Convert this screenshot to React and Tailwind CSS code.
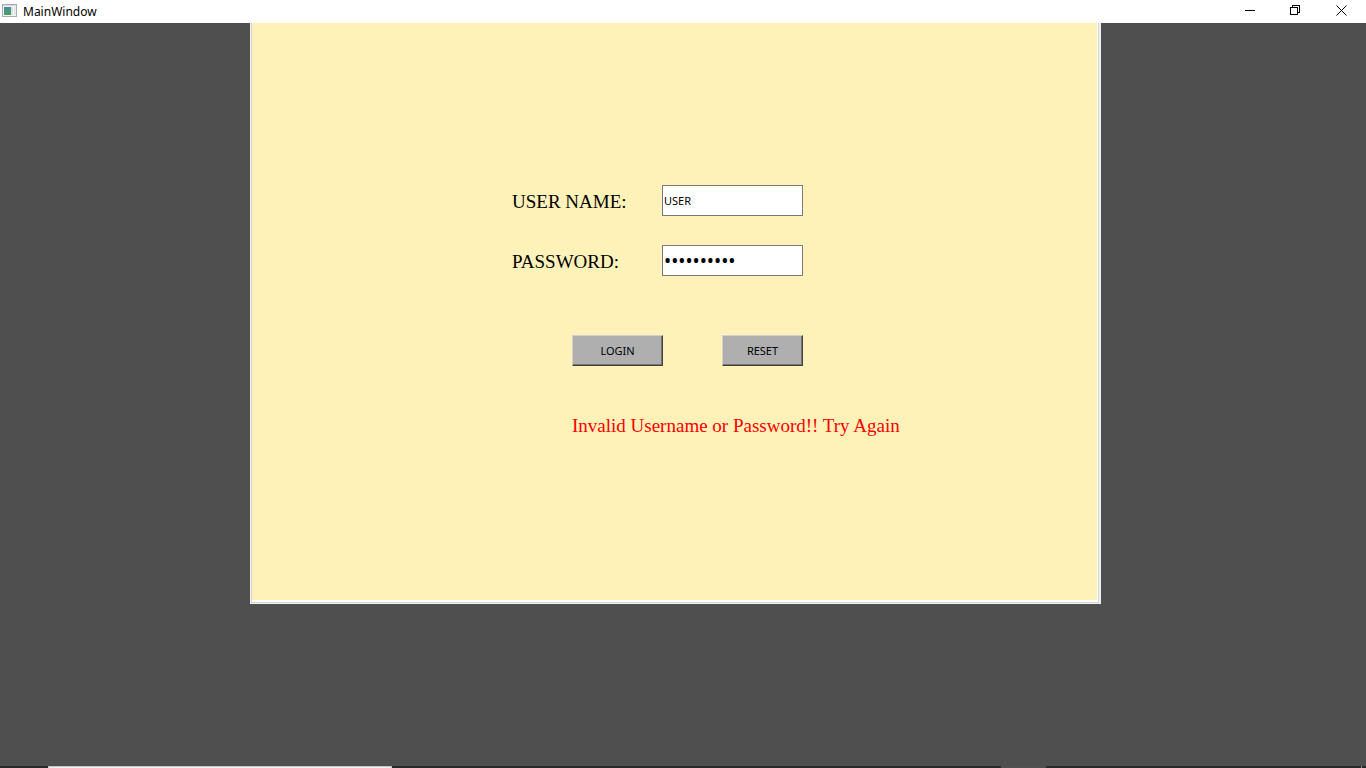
function TitleBar() {
  return (
    <header className="flex h-[23px] shrink-0 items-center justify-between bg-white">
      <div className="flex items-center gap-[5px] pl-0.5">
        <svg width="16" height="16" viewBox="0 0 16 16" aria-hidden="true">
          <defs>
            <linearGradient id="pane" x1="0" y1="0" x2="0.4" y2="1">
              <stop offset="0" stopColor="#4a86b4" />
              <stop offset="1" stopColor="#4d9f62" />
            </linearGradient>
          </defs>
          <rect x="0.5" y="0.5" width="14" height="12" fill="#f4f4f4" stroke="#a9adb1" />
          <rect x="1" y="1" width="13" height="1" fill="#d5dade" />
          <rect x="2" y="3" width="7" height="8" fill="url(#pane)" />
          <rect x="9" y="3" width="2" height="8" fill="#d9e4e4" />
          <rect x="12" y="3" width="2" height="8" fill="#e5e9e9" />
        </svg>
        <h1 className="font-['Noto_Sans',sans-serif] text-[12px] leading-4 text-black">MainWindow</h1>
      </div>
      <div className="flex h-full pb-0.5">
        <button type="button" aria-label="Minimize" className="flex w-[46px] items-center justify-center">
          <svg width="10" height="11" viewBox="0 0 10 11" shapeRendering="crispEdges">
            <path d="M0 5.5H10" stroke="#000" />
          </svg>
        </button>
        <button type="button" aria-label="Restore" className="flex w-[45px] items-center justify-center">
          <svg width="11" height="12" viewBox="0 0 11 12" fill="none" stroke="#000" shapeRendering="crispEdges">
            <path d="M0.5 2.5H7.5V9.5H0.5ZM2.5 2.5V0.5H9.5V7.5H7.5" />
          </svg>
        </button>
        <button type="button" aria-label="Close" className="flex w-12 items-center justify-center">
          <svg width="12" height="11" viewBox="0 0 12 11" fill="none" stroke="#000">
            <path d="M0.5 0.5L10.5 10.5M10.5 0.5L0.5 10.5" />
          </svg>
        </button>
      </div>
    </header>
  );
}

const labelStyle = "w-[150px] pt-0.5 font-['Liberation_Serif',serif] text-[19px] leading-6";
const inputStyle =
  "h-[31px] w-[141px] border border-[#7a7a7a] bg-white px-px font-['Noto_Sans',sans-serif] text-black outline-none";
const buttonStyle =
  "h-[31px] border border-t-[#d0d0d0] border-l-[#d0d0d0] border-r-[#404040] border-b-[#404040] bg-[#afafaf] font-['Noto_Sans',sans-serif] text-[11px] leading-4 text-black shadow-[inset_-1px_-1px_0_#757575]";

function LoginForm() {
  return (
    <form className="pt-[162px] pl-[260px] text-black" onSubmit={(e) => e.preventDefault()}>
      <div className="flex items-center">
        <label htmlFor="username" className={labelStyle}>USER NAME:</label>
        <input id="username" type="text" defaultValue="USER" className={`${inputStyle} text-[11px]`} />
      </div>
      <div className="mt-[29px] flex items-center">
        <label htmlFor="password" className={labelStyle}>PASSWORD:</label>
        <input id="password" type="password" defaultValue="password12" className={`${inputStyle} text-[19px]`} />
      </div>
      <div className="mt-[59px] flex gap-[59px] pl-[60px]">
        <button type="submit" className={`${buttonStyle} w-[91px]`}>LOGIN</button>
        <button type="reset" className={`${buttonStyle} w-[81px]`}>RESET</button>
      </div>
      <p role="alert" className="mt-12 pl-[60px] font-['Liberation_Serif',serif] text-[19px] leading-6 text-[#ff0000]">
        Invalid Username or Password!! Try Again
      </p>
    </form>
  );
}

function TaskbarEdge() {
  return (
    <footer className="flex h-0.5 shrink-0 bg-[#292a2c]">
      <div className="ml-12 w-[344px] border-x border-t border-[#c4c4c4] bg-[#f2f2f2]" />
      <div className="mr-[315px] ml-auto w-[45px] bg-[#505152]" />
      <div className="mr-1 w-px bg-[#8a8a8a]" />
    </footer>
  );
}

export default function App() {
  return (
    <div className="flex min-h-screen flex-col bg-[#4f4f4f]">
      <TitleBar />
      <main className="flex grow items-start justify-center pr-[15px]">
        <div className="w-[851px] border-r-2 border-b border-l border-[#f0f0f0]">
          <div className="border-x border-b border-[#d4d4d4]">
            <section className="h-[579px] border-r border-b-2 border-white bg-[#fff2b9]">
              <LoginForm />
            </section>
          </div>
        </div>
      </main>
      <TaskbarEdge />
    </div>
  );
}
